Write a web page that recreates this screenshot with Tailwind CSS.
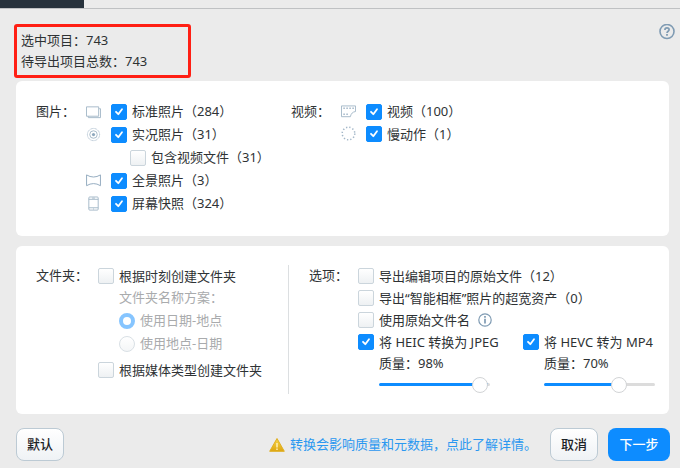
<!DOCTYPE html>
<html lang="zh-CN">
<head>
    <meta charset="UTF-8">
    <meta name="viewport" content="width=device-width, initial-scale=1">
    <title>导出</title>
    <script src="https://cdn.jsdelivr.net/npm/@tailwindcss/browser@4"></script>
</head>
<body class="min-h-screen bg-[#ebebeb] text-[#2e3234] text-[13px] leading-[21px] font-['Noto_Sans','Noto_Sans_CJK_SC',sans-serif]">
    <!-- shared shapes -->
    <svg class="hidden">
        <symbol id="check" viewBox="0 0 16 16"><path d="M5 7.8 7.3 10.2 11 5.2" fill="none" stroke="#fff" stroke-width="1.8" stroke-linecap="round" stroke-linejoin="round"/></symbol>
    </svg>

    <div class="h-[9px] border-b border-[#bfc1c3]">
        <div class="w-[84px] h-2 bg-[#27323c]"></div>
    </div>

    <header class="flex items-start justify-between pl-[14px] pr-[5px] pt-[15px] pb-[3px]">
        <div class="w-[177px] border-3 border-[#ff1f14] rounded-[3px] px-1 py-[3px]">
            <p>选中项目：743</p>
            <p>待导出项目总数：743</p>
        </div>
        <button aria-label="帮助" class="w-4 h-4">
            <svg viewBox="0 0 16 16" class="w-4 h-4" fill="none" stroke="#7f9bb3">
                <circle cx="8" cy="7.5" r="7" stroke-width="1.6"/>
                <path d="M5.9 6C5.9 4.6 6.8 3.9 8 3.9s2.1.8 2.1 1.9C10.1 7.2 8 7.3 8 9" stroke-width="1.7"/>
                <path d="M8 10.1v1.7" stroke-width="1.8"/>
            </svg>
        </button>
    </header>

    <main class="flex flex-col gap-[10px] pl-4 pr-[11px]">
        <section class="flex bg-white rounded-md pl-5 pt-[19px] pb-[21px]">
            <div class="flex w-[255px]">
                <h2 class="w-[50px] leading-[22px]">图片：</h2>
                <ul>
                    <li class="flex items-center h-[23px] gap-[10px]">
                        <svg viewBox="0 0 16 16" class="w-[15px] h-4" fill="none" stroke="#a3b7c8"><path d="M2.5 12.5V14h13V4.500H14M.5 2.500h13v10H.5z"/></svg>
                        <label class="flex items-center gap-[5px]">
                            <span class="grid">
                                <input type="checkbox" checked class="peer col-start-1 row-start-1 appearance-none w-4 h-4 rounded-[2px] border border-[#cbd5dc] bg-linear-to-b from-white to-[#eef1f3] checked:border-[#0d8cff] checked:bg-none checked:bg-[#0d8cff]">
                                <svg class="hidden peer-checked:block col-start-1 row-start-1 w-4 h-4 pointer-events-none"><use href="#check"/></svg>
                            </span>
                            标准照片（284）
                        </label>
                    </li>
                    <li class="flex items-center h-[23px] gap-[10px]">
                        <svg viewBox="0 0 16 16" class="w-[15px] h-4" fill="none" stroke="#a3b7c8"><circle cx="8" cy="7.5" r="6.5" stroke-dasharray="1 .5" stroke-width=".9"/><circle cx="8" cy="7.5" r="4"/><circle cx="8" cy="7.5" r="1.7" fill="#8fa8bd" stroke="none"/></svg>
                        <label class="flex items-center gap-[5px]">
                            <span class="grid">
                                <input type="checkbox" checked class="peer col-start-1 row-start-1 appearance-none w-4 h-4 rounded-[2px] border border-[#cbd5dc] bg-linear-to-b from-white to-[#eef1f3] checked:border-[#0d8cff] checked:bg-none checked:bg-[#0d8cff]">
                                <svg class="hidden peer-checked:block col-start-1 row-start-1 w-4 h-4 pointer-events-none"><use href="#check"/></svg>
                            </span>
                            实况照片（31）
                        </label>
                    </li>
                    <li class="flex items-center h-[23px] pl-11">
                        <label class="flex items-center gap-[5px]">
                            <input type="checkbox" class="appearance-none w-4 h-4 rounded-[2px] border border-[#cbd5dc] bg-linear-to-b from-white to-[#eef1f3] checked:border-[#0d8cff] checked:bg-none checked:bg-[#0d8cff]">
                            包含视频文件（31）
                        </label>
                    </li>
                    <li class="flex items-center h-[23px] gap-[10px]">
                        <svg viewBox="0 0 16 16" class="w-[15px] h-4" fill="none" stroke="#8fa8bd"><path d="M.6 1.500Q8 6 15.400 1.500V13Q8 8.500.6 13z"/></svg>
                        <label class="flex items-center gap-[5px]">
                            <span class="grid">
                                <input type="checkbox" checked class="peer col-start-1 row-start-1 appearance-none w-4 h-4 rounded-[2px] border border-[#cbd5dc] bg-linear-to-b from-white to-[#eef1f3] checked:border-[#0d8cff] checked:bg-none checked:bg-[#0d8cff]">
                                <svg class="hidden peer-checked:block col-start-1 row-start-1 w-4 h-4 pointer-events-none"><use href="#check"/></svg>
                            </span>
                            全景照片（3）
                        </label>
                    </li>
                    <li class="flex items-center h-[23px] gap-[10px]">
                        <svg viewBox="0 0 16 16" class="w-[15px] h-4" fill="none" stroke="#a3b7c8"><rect x="3" y=".5" width="10" height="14" rx="1"/><path d="M3 3h10M3 12h10M6.500 1.700h3M7.500 13.300h1"/></svg>
                        <label class="flex items-center gap-[5px]">
                            <span class="grid">
                                <input type="checkbox" checked class="peer col-start-1 row-start-1 appearance-none w-4 h-4 rounded-[2px] border border-[#cbd5dc] bg-linear-to-b from-white to-[#eef1f3] checked:border-[#0d8cff] checked:bg-none checked:bg-[#0d8cff]">
                                <svg class="hidden peer-checked:block col-start-1 row-start-1 w-4 h-4 pointer-events-none"><use href="#check"/></svg>
                            </span>
                            屏幕快照（324）
                        </label>
                    </li>
                </ul>
            </div>
            <div class="flex">
                <h2 class="w-[50px] leading-[22px]">视频：</h2>
                <ul>
                    <li class="flex items-center h-[23px] gap-[10px]">
                        <svg viewBox="0 0 16 16" class="w-[15px] h-4" fill="none" stroke="#a3b7c8"><path d="M.5 1.500h15v6q-4.500.5-5.500 5.500H.5z"/><path d="M2.500 4h12M2.500 10.500h6" stroke-width="1.600" stroke-dasharray="1.600 1.600"/></svg>
                        <label class="flex items-center gap-[5px]">
                            <span class="grid">
                                <input type="checkbox" checked class="peer col-start-1 row-start-1 appearance-none w-4 h-4 rounded-[2px] border border-[#cbd5dc] bg-linear-to-b from-white to-[#eef1f3] checked:border-[#0d8cff] checked:bg-none checked:bg-[#0d8cff]">
                                <svg class="hidden peer-checked:block col-start-1 row-start-1 w-4 h-4 pointer-events-none"><use href="#check"/></svg>
                            </span>
                            视频（100）
                        </label>
                    </li>
                    <li class="flex items-center h-[22px] gap-[10px]">
                        <svg viewBox="0 0 16 16" class="w-[15px] h-4" fill="none" stroke="#a3b7c8"><circle cx="8" cy="7.500" r="6.700" stroke-width="1.600" stroke-dasharray="1.400 2.108"/></svg>
                        <label class="flex items-center gap-[5px]">
                            <span class="grid">
                                <input type="checkbox" checked class="peer col-start-1 row-start-1 appearance-none w-4 h-4 rounded-[2px] border border-[#cbd5dc] bg-linear-to-b from-white to-[#eef1f3] checked:border-[#0d8cff] checked:bg-none checked:bg-[#0d8cff]">
                                <svg class="hidden peer-checked:block col-start-1 row-start-1 w-4 h-4 pointer-events-none"><use href="#check"/></svg>
                            </span>
                            慢动作（1）
                        </label>
                    </li>
                </ul>
            </div>
        </section>

        <section class="flex bg-white rounded-md pl-5 pt-[19px] pb-5">
            <div class="flex w-[253px] border-r border-[#dcdfe1]">
                <h2 class="w-[62px]">文件夹：</h2>
                <div>
                    <label class="flex items-center h-[22px] gap-[5px]">
                        <input type="checkbox" class="appearance-none w-4 h-4 rounded-[2px] border border-[#cbd5dc] bg-linear-to-b from-white to-[#eef1f3] checked:border-[#0d8cff] checked:bg-none checked:bg-[#0d8cff]">
                        根据时刻创建文件夹
                    </label>
                    <fieldset disabled class="pl-[21px] text-[#a9abad]">
                        <legend class="pb-px">文件夹名称方案：</legend>
                        <label class="flex items-center h-[23px] gap-[5px]">
                            <input type="radio" name="scheme" checked class="appearance-none w-4 h-4 rounded-full border border-[#d9e0e5] bg-linear-to-b from-white to-[#f4f6f7] checked:border-4 checked:border-[#86c5ff] checked:bg-none checked:bg-white">
                            使用日期-地点
                        </label>
                        <label class="flex items-center h-[23px] gap-[5px]">
                            <input type="radio" name="scheme" class="appearance-none w-4 h-4 rounded-full border border-[#d9e0e5] bg-linear-to-b from-white to-[#f4f6f7] checked:border-4 checked:border-[#86c5ff] checked:bg-none checked:bg-white">
                            使用地点-日期
                        </label>
                    </fieldset>
                    <label class="flex items-center h-[22px] gap-[5px] mt-1">
                        <input type="checkbox" class="appearance-none w-4 h-4 rounded-[2px] border border-[#cbd5dc] bg-linear-to-b from-white to-[#eef1f3] checked:border-[#0d8cff] checked:bg-none checked:bg-[#0d8cff]">
                        根据媒体类型创建文件夹
                    </label>
                </div>
            </div>
            <div class="flex pl-5 pb-2">
                <h2 class="w-[49px]">选项：</h2>
                <div>
                    <label class="flex items-center h-[22px] gap-[5px]">
                        <input type="checkbox" class="appearance-none w-4 h-4 rounded-[2px] border border-[#cbd5dc] bg-linear-to-b from-white to-[#eef1f3] checked:border-[#0d8cff] checked:bg-none checked:bg-[#0d8cff]">
                        导出编辑项目的原始文件（12）
                    </label>
                    <label class="flex items-center h-[22px] gap-[5px]">
                        <input type="checkbox" class="appearance-none w-4 h-4 rounded-[2px] border border-[#cbd5dc] bg-linear-to-b from-white to-[#eef1f3] checked:border-[#0d8cff] checked:bg-none checked:bg-[#0d8cff]">
                        导出“智能相框”照片的超宽资产（0）
                    </label>
                    <div class="flex items-center h-[22px] gap-2">
                        <label class="flex items-center gap-[5px]">
                            <input type="checkbox" class="appearance-none w-4 h-4 rounded-[2px] border border-[#cbd5dc] bg-linear-to-b from-white to-[#eef1f3] checked:border-[#0d8cff] checked:bg-none checked:bg-[#0d8cff]">
                            使用原始文件名
                        </label>
                        <button aria-label="说明">
                            <svg viewBox="0 0 14 14" class="w-[14px] h-[14px]" fill="none" stroke="#7f9bb3"><circle cx="7" cy="7" r="6.200" stroke-width="1.200"/><path d="M7 5.800v4.700M7 3v1.700" stroke-width="1.700"/></svg>
                        </button>
                    </div>
                    <div class="flex">
                        <div class="w-[165px]">
                            <label class="flex items-center h-[22px] gap-[5px] whitespace-nowrap">
                                <span class="grid">
                                    <input type="checkbox" checked class="peer col-start-1 row-start-1 appearance-none w-4 h-4 rounded-[2px] border border-[#cbd5dc] bg-linear-to-b from-white to-[#eef1f3] checked:border-[#0d8cff] checked:bg-none checked:bg-[#0d8cff]">
                                    <svg class="hidden peer-checked:block col-start-1 row-start-1 w-4 h-4 pointer-events-none"><use href="#check"/></svg>
                                </span>
                                将 HEIC 转换为 JPEG
                            </label>
                            <div class="pl-[21px]">
                                <label for="heic" class="block leading-5">质量：98%</label>
                                <input id="heic" type="range" value="98" style="background-size: 98% 100%" class="block appearance-none w-[111px] h-[3px] mt-[10px] rounded-full bg-[#dcdcdc] bg-linear-to-r from-[#0d8cff] to-[#0d8cff] bg-no-repeat [&::-webkit-slider-thumb]:appearance-none [&::-webkit-slider-thumb]:w-4 [&::-webkit-slider-thumb]:h-4 [&::-webkit-slider-thumb]:rounded-full [&::-webkit-slider-thumb]:bg-white [&::-webkit-slider-thumb]:border [&::-webkit-slider-thumb]:border-[#d2d4d6]">
                            </div>
                        </div>
                        <div>
                            <label class="flex items-center h-[22px] gap-[5px] whitespace-nowrap">
                                <span class="grid">
                                    <input type="checkbox" checked class="peer col-start-1 row-start-1 appearance-none w-4 h-4 rounded-[2px] border border-[#cbd5dc] bg-linear-to-b from-white to-[#eef1f3] checked:border-[#0d8cff] checked:bg-none checked:bg-[#0d8cff]">
                                    <svg class="hidden peer-checked:block col-start-1 row-start-1 w-4 h-4 pointer-events-none"><use href="#check"/></svg>
                                </span>
                                将 HEVC 转为 MP4
                            </label>
                            <div class="pl-[21px]">
                                <label for="hevc" class="block leading-5">质量：70%</label>
                                <input id="hevc" type="range" value="70" style="background-size: 70% 100%" class="block appearance-none w-[111px] h-[3px] mt-[10px] rounded-full bg-[#dcdcdc] bg-linear-to-r from-[#0d8cff] to-[#0d8cff] bg-no-repeat [&::-webkit-slider-thumb]:appearance-none [&::-webkit-slider-thumb]:w-4 [&::-webkit-slider-thumb]:h-4 [&::-webkit-slider-thumb]:rounded-full [&::-webkit-slider-thumb]:bg-white [&::-webkit-slider-thumb]:border [&::-webkit-slider-thumb]:border-[#d2d4d6]">
                            </div>
                        </div>
                    </div>
                </div>
            </div>
        </section>
    </main>

    <footer class="flex items-center pl-4 pr-[10px] pt-[14px]">
        <button class="w-12 h-[33px] rounded-lg border border-[#bccad4] bg-linear-to-b from-white to-[#eff2f5] font-medium text-[#1c2226]">默认</button>
        <a href="#" class="flex items-center gap-[5px] ml-auto mr-[13px] text-[#2b98f0]">
            <svg viewBox="0 0 16 16" class="w-4 h-4">
                <defs><linearGradient id="warn" x2="0" y2="1"><stop stop-color="#f7d64a"/><stop offset="1" stop-color="#dda510"/></linearGradient></defs>
                <path d="M8 1.500 15.300 14.300H.7z" fill="url(#warn)" stroke="#dfae22" stroke-width="1" stroke-linejoin="round"/>
                <path d="M8 6v4.500M8 11.500v1.500" stroke="#fff3c4" stroke-width="1.400"/>
            </svg>
            转换会影响质量和元数据，点此了解详情。
        </a>
        <button class="w-12 h-[33px] rounded-lg border border-[#bccad4] bg-linear-to-b from-white to-[#eff2f5] font-medium text-[#1c2226]">取消</button>
        <button class="w-[62px] h-[33px] ml-[10px] rounded-lg bg-[#0d8cff] font-medium text-white">下一步</button>
    </footer>
</body>
</html>
